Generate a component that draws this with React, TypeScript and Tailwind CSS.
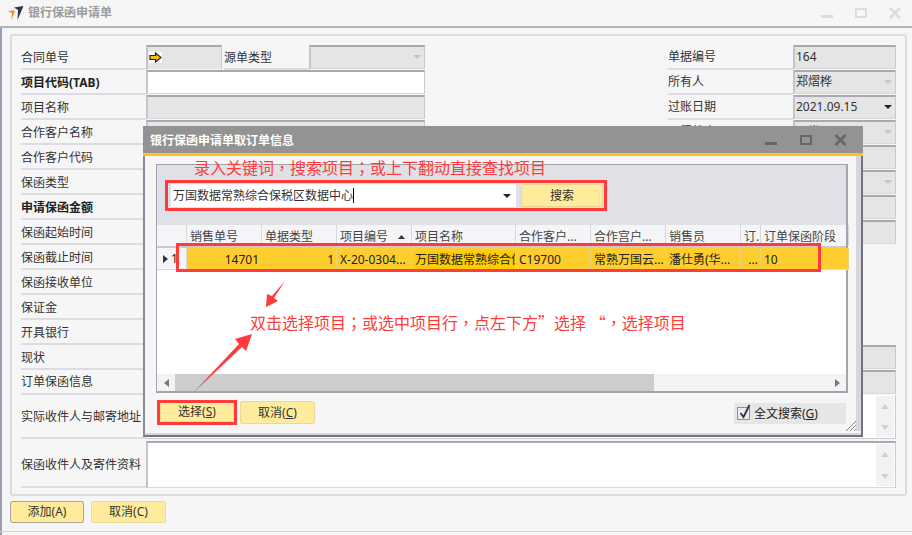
import React from "react";

const font = { fontFamily: '"Noto Sans","Noto Sans CJK SC",sans-serif' };
const scFont = { fontFamily: '"Noto Sans CJK SC",sans-serif' };
const tcPunct = { fontFamily: '"Noto Sans CJK TC",sans-serif' };

function Caret({ dark = false }: { dark?: boolean }) {
  return (
    <svg width="8" height="4" viewBox="0 0 8 4" className="shrink-0">
      <path d="M0 0H8L4 4Z" fill={dark ? "#222" : "#c4c4cc"} />
    </svg>
  );
}

function Row({ label, bold, tight, children }: { label: string; bold?: boolean; tight?: boolean; children?: React.ReactNode }) {
  return (
    <div className="flex h-[25px]">
      <div className={`w-[125px] shrink-0 border-b-2 border-[#dcdce2] text-[12px] whitespace-nowrap ${tight ? "leading-[24px]" : "leading-[26px]"} ${bold ? "font-bold text-[#222]" : "text-[#333]"}`}>{label}</div>
      {children}
    </div>
  );
}

function Field({ value, white, select, dark }: { value?: string; white?: boolean; select?: boolean; dark?: boolean }) {
  return (
    <div className={`flex-1 min-w-0 h-[24px] border-t-2 border-l-2 border-r border-b border-t-[#a9a9b2] border-l-[#c4c4cc] border-r-[#c9c9d0] border-b-[#d8d8de] flex items-center justify-between pl-[1px] pr-[3px] pb-[2px] text-[12px] text-[#333] ${white ? "bg-white" : "bg-[#e5e5e5]"}`}>
      <span>{value}</span>
      {select ? <Caret dark={dark} /> : null}
    </div>
  );
}

function Scroll() {
  return (
    <div className="w-[18px] h-full bg-[#f2f2f4] flex flex-col items-center justify-between pt-[8px] pb-[7px]">
      <svg width="8" height="5" viewBox="0 0 8 5"><path d="M0 5H8L4 0Z" fill="#d0d0d6" /></svg>
      <svg width="8" height="5" viewBox="0 0 8 5"><path d="M0 0H8L4 5Z" fill="#d0d0d6" /></svg>
    </div>
  );
}

function Btn({ children, strong, w = "w-[75px]", h = "h-[23px]" }: { children: React.ReactNode; strong?: boolean; w?: string; h?: string }) {
  return (
    <div className={`${w} ${h} shrink-0 rounded-[2px] bg-[#ffeb9c] border flex items-center justify-center text-[12px] text-[#333] ${strong ? "border-[#a9a69a]" : "border-[#e8d99a]"}`}>
      {children}
    </div>
  );
}

const columns: { head: string; cell: string; w: string; right?: boolean; hi?: boolean }[] = [
  { head: "销售单号", cell: "14701", w: "w-[75px]", right: true },
  { head: "单据类型", cell: "1", w: "w-[75px]", right: true },
  { head: "项目编号", cell: "X-20-0304...", w: "w-[75px]" },
  { head: "项目名称", cell: "万国数据常熟综合保税区数据中心", w: "w-[104px]", hi: true },
  { head: "合作客户...", cell: "C19700", w: "w-[75px]" },
  { head: "合作宫户...", cell: "常熟万国云...", w: "w-[75px]" },
  { head: "销售员", cell: "潘仕勇(华...", w: "w-[75px]" },
  { head: "订.", cell: "...", w: "w-[20px]", right: true },
  { head: "订单保函阶段", cell: "10", w: "w-[88px]" },
];

function Dialog() {
  return (
    <div className="absolute left-[143px] top-[126px] w-[720px] h-[311px] border-2 border-t-0 border-[#73737f] border-l-[#8a8a94] bg-[#f6f6f6] flex flex-col">
      <div className="h-[27px] -mx-[2px] bg-[#939393] flex items-center justify-between shrink-0 pl-[7px] pr-[16px]">
        <span className="text-[12px] font-bold text-white pt-[2px]">银行保函申请单取订单信息</span>
        <div className="flex items-center gap-[22px]">
          <svg width="13" height="12" viewBox="0 0 13 12"><rect x="0" y="8" width="12" height="3" fill="#666" /></svg>
          <svg width="12" height="12" viewBox="0 0 12 12"><path d="M1 2H11V10H1Z" fill="none" stroke="#666" strokeWidth="2" /></svg>
          <svg width="13" height="12" viewBox="0 0 13 12"><path d="M1.5 1L11.5 11M11.5 1L1.5 11" stroke="#666" strokeWidth="2.6" /></svg>
        </div>
      </div>
      <div className="h-[3px] -mx-[2px] bg-[#ffc21e] shrink-0" />
      <div className="flex-1 flex min-h-0">
        <div className="flex-1 min-w-0 flex flex-col pl-[11px] pr-[8px] pt-[8px]">
          <div className="h-[229px] shrink-0 border border-[#a4a4b0] border-r-2 border-b-2 flex flex-col bg-white">
            <div className="h-[60px] shrink-0 bg-[#e0e1e6] flex items-start pl-[14px] pt-[19px]">
              <div className="w-[345px] h-[23px] bg-white flex items-center justify-between pl-[2px] pr-[5px] text-[12px] text-[#333]">
                <span className="flex items-center">万国数据常熟综合保税区数据中心<span className="w-px h-[15px] bg-black" /></span>
                <Caret dark />
              </div>
              <div className="ml-[5px]"><Btn w="w-[82px]" h="h-[23px]">搜索</Btn></div>
            </div>
            <div className="flex h-[23px] shrink-0 bg-[#f5f5f7] border-b-2 border-[#c9c9d0] text-[12px] text-[#444]">
              <div className="w-[30px] border-r border-[#d8d8de] shrink-0" />
              {columns.map((c, i) => (
                <div key={c.head} className={`${c.w} shrink-0 border-r border-[#d8d8de] pl-[3px] pt-[2px] flex items-center justify-between whitespace-nowrap overflow-hidden ${i === 2 ? "pr-[6px]" : ""}`}>
                  <span className="block overflow-hidden">{c.head}</span>
                  {i === 2 ? <svg width="7" height="4" viewBox="0 0 7 4" className="shrink-0"><path d="M0 4H7L3.5 0Z" fill="#333" /></svg> : null}
                </div>
              ))}
            </div>
            <div className="flex h-[22px] shrink-0 text-[12px] text-[#222]">
              <div className="w-[30px] shrink-0 border-r border-b border-[#d8d8de] bg-[#f5f5f7] flex items-center pl-[6px] gap-[3px] overflow-hidden">
                <svg width="5" height="8" viewBox="0 0 5 8" className="shrink-0"><path d="M0 0L5 4L0 8Z" fill="#333" /></svg>
                <span>1</span>
              </div>
              <div className="flex flex-1 bg-[#ffce2e] border-b border-[#d8d8de]">
                {columns.map((c) => (
                  <div key={c.head} className={`${c.w} shrink-0 border-r border-[#e8d27a] pt-[2px] flex items-center whitespace-nowrap overflow-hidden ${c.right ? "justify-end pr-[2px]" : "pl-[3px]"}`}>
                    <span className={`block overflow-hidden ${c.hi ? "bg-[#ffcc00]" : ""}`}>{c.cell}</span>
                  </div>
                ))}
              </div>
            </div>
            <div className="flex-1" />
            <div className="h-[17px] shrink-0 flex bg-[#f3f3f3] items-center">
              <div className="w-[18px] h-full flex items-center justify-center">
                <svg width="5" height="8" viewBox="0 0 5 8"><path d="M5 0L0 4L5 8Z" fill="#777" /></svg>
              </div>
              <div className="w-[479px] h-full bg-[#cdcdcd]" />
              <div className="flex-1" />
              <div className="w-[18px] h-full flex items-center justify-center">
                <svg width="5" height="8" viewBox="0 0 5 8"><path d="M0 0L5 4L0 8Z" fill="#777" /></svg>
              </div>
            </div>
          </div>
          <div className="flex-1 flex items-start pt-[8px] relative">
            <div className="ml-[4px]"><Btn w="w-[74px]" h="h-[21px]">选择(<u>S</u>)</Btn></div>
            <div className="ml-[6px]"><Btn>取消(<u>C</u>)</Btn></div>
            <div className="ml-auto mr-[2px] mt-[2px] w-[112px] h-[21px] bg-[#e6e6e6] flex items-center pl-[3px] gap-[4px] text-[12px] text-[#222]">
              <div className="relative w-[13px] h-[13px] border border-[#8f8f9a] bg-[#e9e9f0]">
                <svg width="14" height="15" viewBox="0 0 14 15" className="absolute left-0 -top-[4px]"><path d="M2.5 9L5.5 13L11.5 1" fill="none" stroke="#333340" strokeWidth="1.8" /></svg>
              </div>
              <span>全文搜索(<u>G</u>)</span>
            </div>
          </div>
        </div>
        <div className="w-[5px] shrink-0 bg-[#d6d6dc] mb-[2px]" />
      </div>
      <div className="h-[2px] shrink-0 bg-[#d6d6dc]" />
      <svg width="12" height="12" viewBox="0 0 12 12" className="absolute right-[4px] bottom-[3px]">
        <path d="M1 11L11 1M5 11L11 5M9 11L11 9" stroke="#888" strokeWidth="1" />
      </svg>
    </div>
  );
}

function P({ children }: { children: string }) {
  return <span style={tcPunct}>{children}</span>;
}

function Annotations() {
  return (
    <>
      <div className="absolute left-[165px] top-[180px] w-[442px] h-[31px] border-[3px] border-[#ff3b3b]" />
      <div className="absolute left-[176px] top-[243px] w-[645px] h-[29px] border-[3px] border-[#ff3b3b]" />
      <div className="absolute left-[157px] top-[400px] w-[80px] h-[25px] border-[3px] border-[#ff3b3b]" />
      <div style={scFont} className="absolute left-[194px] top-[155px] text-[16px] leading-[24px] text-[#ff3b3b] whitespace-nowrap">录入关键词<P>，</P>搜索项目<P>；</P>或上下翻动直接查找项目</div>
      <div style={scFont} className="absolute left-[250px] top-[310px] text-[16px] leading-[24px] text-[#ff3b3b] whitespace-nowrap">双击选择项目<P>；</P>或选中项目行<P>，</P>点左下方”选择 “<P>，</P>选择项目</div>
      <svg width="912" height="535" className="absolute left-0 top-0 pointer-events-none">
        <path d="M285 281L274 298L278 301L266 307L267 294L272 296Z" fill="#ff3b3b" />
        <path d="M193 393L242 347L246 351L252 334L235 339L239 344Z" fill="#ff3b3b" />
      </svg>
    </>
  );
}

const leftRows: [string, boolean?, boolean?][] = [
  ["项目代码(TAB)", true, true],
  ["项目名称"],
  ["合作客户名称"],
  ["合作客户代码"],
  ["保函类型"],
  ["申请保函金额", true],
  ["保函起始时间"],
  ["保函截止时间"],
  ["保函接收单位"],
  ["保证金"],
  ["开具银行"],
];

export default function App() {
  return (
    <div style={font} className="relative w-[912px] h-[535px] overflow-hidden bg-[#f6f6f6] flex flex-col">
      <div className="h-[28px] shrink-0 border-b-2 border-[#b4b4b4] flex items-center justify-between pl-[8px] pr-[11px]">
        <div className="flex items-center gap-[4px]">
          <svg width="16" height="15" viewBox="0 0 16 15">
            <path d="M6 1.5L15.5 0L9.5 14L10 4Z" fill="#27384f" />
            <path d="M0 5L7 4.5L3.5 14L4 7Z" fill="#ef8a1f" />
          </svg>
          <span className="text-[12px] font-bold text-[#9b9b9b]">银行保函申请单</span>
        </div>
        <div className="flex items-center gap-[22px]">
          <svg width="12" height="12" viewBox="0 0 12 12"><rect y="8" width="12" height="3" fill="#dcdcdc" /></svg>
          <svg width="12" height="12" viewBox="0 0 12 12"><path d="M1 2H11V10H1Z" fill="none" stroke="#dcdcdc" strokeWidth="2" /></svg>
          <svg width="12" height="12" viewBox="0 0 12 12"><path d="M1 1L11 11M11 1L1 11" stroke="#dcdcdc" strokeWidth="2.6" /></svg>
        </div>
      </div>
      <div className="flex-1 min-h-0 flex flex-col pl-[8px] pr-[5px] pt-[6px] border-l-2 border-[#9c9cac] pb-[4px] relative">
        <div className="h-[462px] shrink-0 border-2 border-[#dcdce0] rounded-[3px] pl-[9px] pr-[9px] pt-[9px] flex flex-col">
          <div className="flex justify-between">
            <div className="w-[404px] flex flex-col">
              <Row label="合同单号">
                <div className="w-[76px] h-[24px] bg-[#e5e5e5] border-t-2 border-l-2 border-r border-t-[#a9a9b2] border-l-[#c4c4cc] border-r-[#c9c9d0] flex items-center pl-[1px] pb-[2px]">
                  <svg width="13" height="11" viewBox="0 0 13 11" className="bg-white"><path d="M1 3.5H6.5V1L12 5.5L6.5 10V7.5H1Z" fill="#ffc000" stroke="#222" strokeWidth="1.2" /></svg>
                </div>
                <div className="w-[85px] shrink-0 ml-[2px] border-b-2 border-[#dcdce2] text-[12px] leading-[26px] text-[#333]">源单类型</div>
                <Field select />
              </Row>
              {leftRows.map(([l, b, w]) => (
                <Row key={l} label={l} bold={b}>
                  <Field white={w} />
                </Row>
              ))}
            </div>
            <div className="w-[228px] flex flex-col">
              <Row tight label="单据编号"><Field value="164" /></Row>
              <Row tight label="所有人"><Field value="郑熠桦" select /></Row>
              <Row tight label="过账日期"><Field value="2021.09.15" select dark /></Row>
              <Row tight label="工程状态"><Field value="正常" select /></Row>
              <Row tight label="部门"><Field /></Row>
              <Row tight label="币种"><Field select /></Row>
              <Row tight label="汇率"><Field /></Row>
              <Row tight label="备注"><Field /></Row>
            </div>
          </div>
          <Row label="现状"><Field /></Row>
          <Row tight label="订单保函信息"><Field /></Row>
          <div className="flex h-[44px]">
            <div className="w-[125px] shrink-0 border-b-2 border-[#dcdce2] flex items-center pt-[2px] text-[12px] text-[#333] whitespace-nowrap">实际收件人与邮寄地址</div>
            <div className="flex-1 bg-white border-r border-b border-[#c9c9d0] flex justify-end p-[1px]"><Scroll /></div>
          </div>
          <div className="flex h-[47px] mt-[2px]">
            <div className="w-[125px] shrink-0 border-b-2 border-[#dcdce2] flex items-center pt-[2px] text-[12px] text-[#333] whitespace-nowrap">保函收件人及寄件资料</div>
            <div className="flex-1 bg-white border-t-2 border-l-2 border-r border-b border-t-[#a9a9b2] border-l-[#c4c4cc] border-r-[#c9c9d0] border-b-[#d8d8de] flex justify-end p-[1px]"><Scroll /></div>
          </div>
        </div>
        <div className="flex gap-[7px] mt-[5px]">
          <Btn strong w="w-[74px]" h="h-[22px]">添加(A)</Btn>
          <Btn w="w-[75px]" h="h-[22px]">取消(C)</Btn>
        </div>
      </div>
      <div className="absolute left-0 right-0 bottom-[3px] h-px bg-[#d4d4d8]" />
      <Dialog />
      <Annotations />
    </div>
  );
}
